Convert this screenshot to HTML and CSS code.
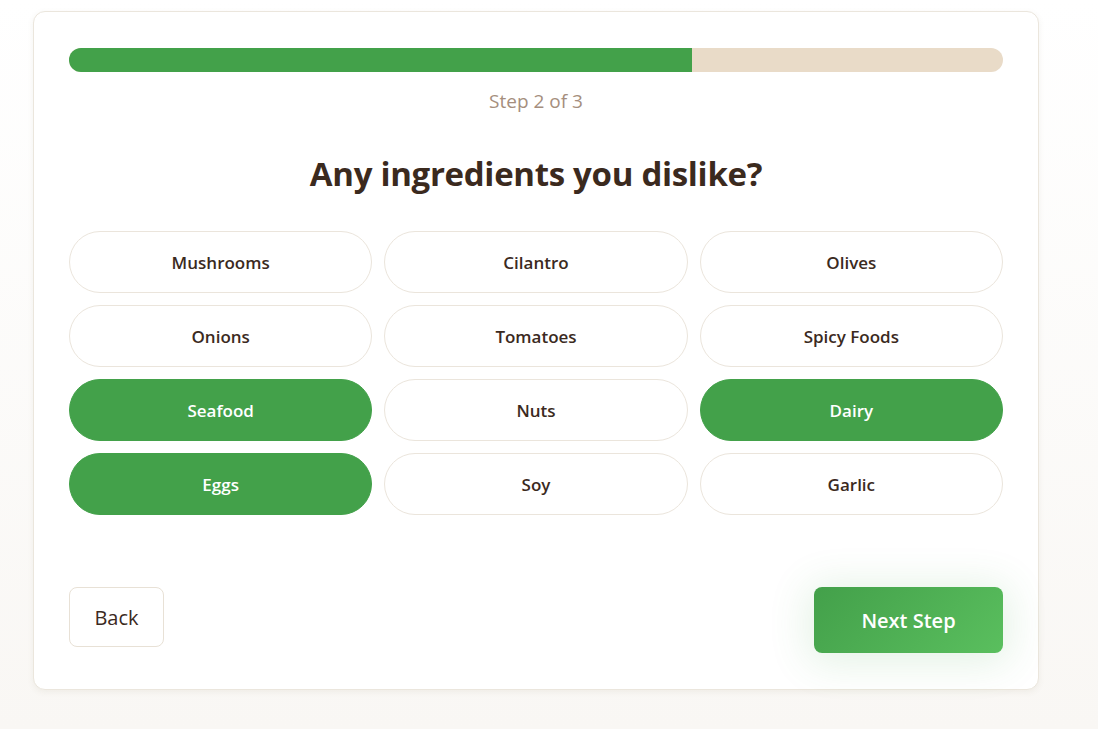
FILE: index.html
```html
<!DOCTYPE html>
<html lang="en">
<head>
<meta charset="utf-8">
<title>Preferences - Step 2</title>
<link rel="stylesheet" href="styles.css">
</head>
<body>
<main class="card">
  <div class="progress"><div class="progress-fill"></div></div>
  <p class="step">Step 2 of 3</p>
  <h1 class="title">Any ingredients you dislike?</h1>
  <div class="options">
    <button class="opt">Mushrooms</button>
    <button class="opt">Cilantro</button>
    <button class="opt">Olives</button>
    <button class="opt">Onions</button>
    <button class="opt">Tomatoes</button>
    <button class="opt">Spicy Foods</button>
    <button class="opt selected">Seafood</button>
    <button class="opt">Nuts</button>
    <button class="opt selected">Dairy</button>
    <button class="opt selected">Eggs</button>
    <button class="opt">Soy</button>
    <button class="opt">Garlic</button>
  </div>
  <div class="actions">
    <button class="btn-back">Back</button>
    <button class="btn-next">Next Step</button>
  </div>
</main>
</body>
</html>
```
FILE: styles.css
```css
* { box-sizing: border-box; }
html, body { height: 100%; }
body {
  margin: 0;
  font-family: "Open Sans", "Noto Sans", sans-serif;
  background: linear-gradient(180deg, #ffffff 0%, #f9f7f4 100%);
  color: #3d2b1f;
}
.card {
  width: 1006px;
  margin: 11px 0 0 33px;
  padding: 36px 35px 36px 35px;
  background: #ffffff;
  border: 1px solid #ebe6dd;
  border-radius: 12px;
  box-shadow: 0 2px 6px rgba(120, 100, 70, 0.08);
}
.progress {
  height: 24px;
  background: #e9dbc8;
  border-radius: 12px;
  overflow: hidden;
}
.progress-fill {
  width: 66.7%;
  height: 100%;
  background: #43a14a;
}
.step {
  margin: 14px 0 0;
  text-align: center;
  font-size: 19px;
  line-height: 30px;
  color: #a58e7d;
}
.title {
  margin: 36px 0 0;
  text-align: center;
  font-size: 33px;
  line-height: 44px;
  font-weight: 700;
  color: #3b2a1e;
  letter-spacing: -0.3px;
}
.options {
  margin-top: 35px;
  display: grid;
  grid-template-columns: repeat(3, 1fr);
  gap: 12px;
}
.opt {
  height: 62px;
  border: 1px solid #ebe5dc;
  border-radius: 31px;
  background: #ffffff;
  font-family: inherit;
  font-size: 17px;
  font-weight: 600;
  color: #3b2a1e;
  cursor: pointer;
}
.opt.selected {
  background: #43a14a;
  border-color: #43a14a;
  color: #ffffff;
}
.actions {
  margin-top: 72px;
  display: flex;
  justify-content: space-between;
  align-items: flex-start;
}
.btn-back {
  width: 95px;
  height: 60px;
  background: #ffffff;
  border: 1px solid #e8e1d6;
  border-radius: 8px;
  font-family: inherit;
  font-size: 20px;
  font-weight: 500;
  color: #3b2a1e;
}
.btn-next {
  width: 189px;
  height: 66px;
  border: none;
  border-radius: 8px;
  background: linear-gradient(135deg, #43a04a 0%, #5abf5e 100%);
  box-shadow: 0 4px 40px 6px rgba(67, 160, 74, 0.14);
  font-family: inherit;
  font-size: 20px;
  font-weight: 600;
  color: #ffffff;
}
```
